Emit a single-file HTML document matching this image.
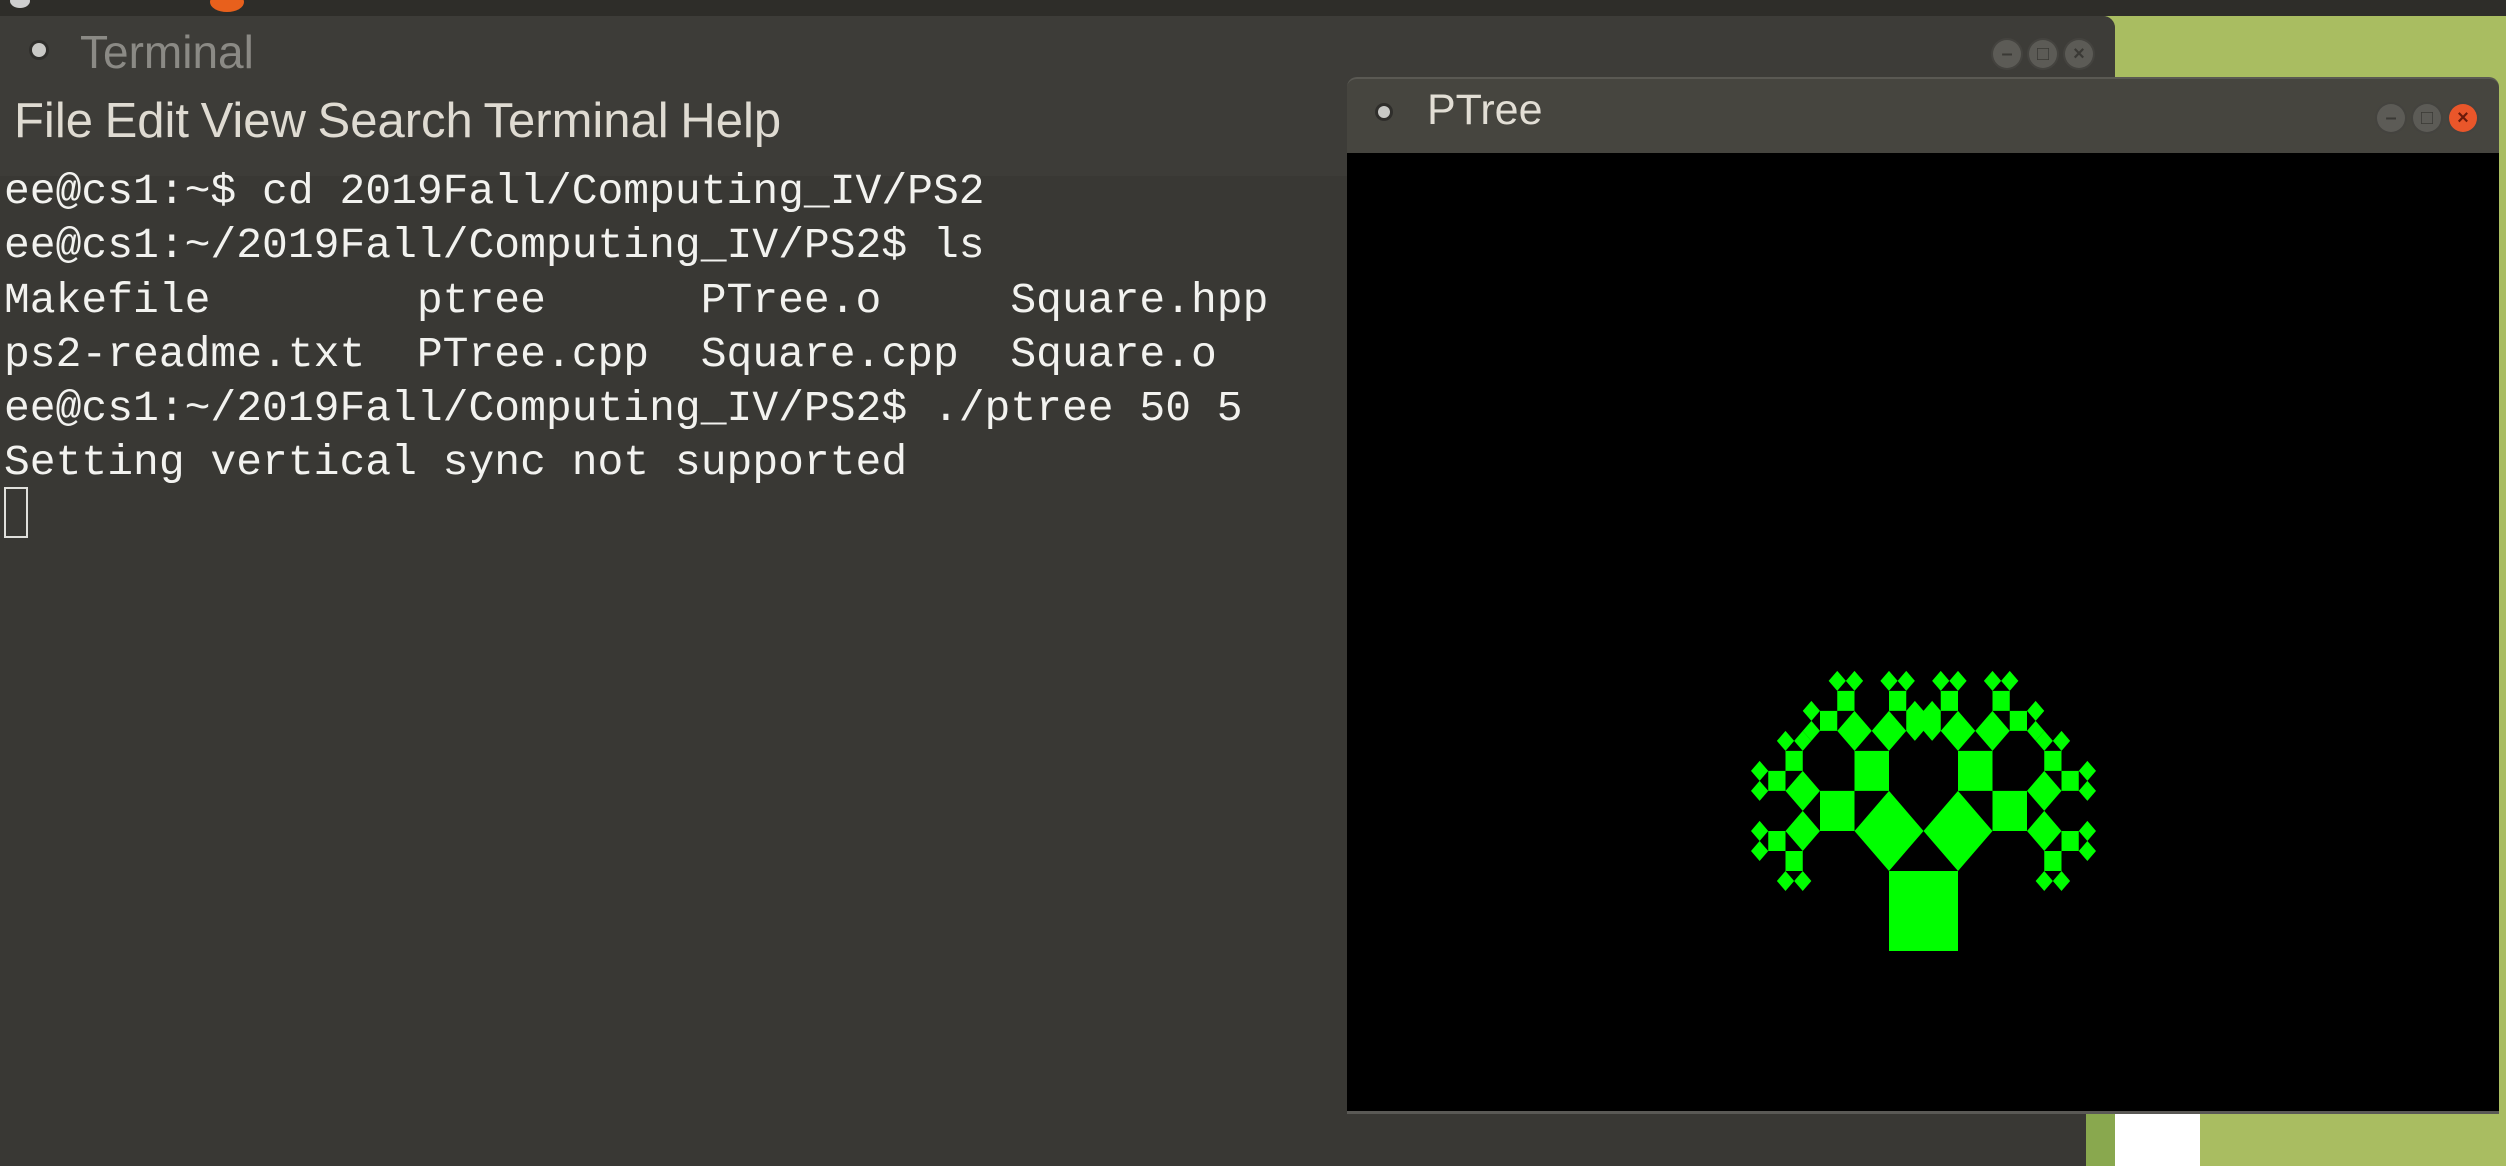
<!DOCTYPE html>
<html><head><meta charset="utf-8"><style>
html,body{margin:0;padding:0;}
body{width:2506px;height:1166px;position:relative;overflow:hidden;background:#a9bd61;font-family:"Liberation Sans",sans-serif;}
.abs{position:absolute;}
.topbar{left:0;top:0;width:2506px;height:16px;background:#2e2d29;}
.term{left:0;top:16px;width:2115px;height:1150px;background:#393834;border-top-right-radius:12px;overflow:hidden;}
.ttitle{left:0;top:0;width:2115px;height:72px;background:#3d3c38;}
.menu{left:0;top:72px;width:2115px;height:88px;background:#3d3c38;}
.mono{font-family:"Liberation Mono",monospace;font-size:43px;color:#f2f2ef;white-space:pre;line-height:54.3px;}
.btn{position:absolute;width:28px;height:28px;border-radius:50%;background:#5c5b56;box-shadow:0 0 0 2px #44433f;color:#3a3935;font-size:20px;line-height:28px;text-align:center;font-weight:bold;}
</style></head><body>
<div class="abs topbar"></div>
<div class="abs" style="left:10px;top:-6px;width:20px;height:14px;border-radius:50%;background:#cfcfcf"></div>
<div class="abs" style="left:210px;top:-8px;width:34px;height:20px;border-radius:50%;background:#e8601c"></div>
<div class="abs term">
  <div class="abs ttitle"></div>
  <div class="abs" style="left:32px;top:27px;width:14px;height:14px;border-radius:50%;background:#c9c9c6;box-shadow:0 0 0 3px #2f2e2b"></div>
  <div class="abs" style="left:80px;top:9px;font-size:46px;color:#8b8a85;">Terminal</div>
  <div class="btn" style="left:1993px;top:24px">–</div>
  <div class="btn" style="left:2029px;top:24px">□</div>
  <div class="btn" style="left:2065px;top:24px">×</div>
  <div class="abs menu"></div>
  <div class="abs" style="left:14px;top:77px;font-size:49px;color:#dfdbd2;word-spacing:-2px;">File Edit View Search Terminal Help</div>
  <div class="abs mono" style="left:4px;top:149px;">ee@cs1:~$ cd 2019Fall/Computing_IV/PS2
ee@cs1:~/2019Fall/Computing_IV/PS2$ ls
Makefile        ptree      PTree.o     Square.hpp
ps2-readme.txt  PTree.cpp  Square.cpp  Square.o
ee@cs1:~/2019Fall/Computing_IV/PS2$ ./ptree 50 5
Setting vertical sync not supported</div>
  <div class="abs" style="left:4px;top:471px;width:24px;height:51px;border:2px solid #e0e0dc;box-sizing:border-box"></div>
</div>
<div class="abs" style="left:2086px;top:1111px;width:29px;height:55px;background:#89a84e"></div>
<div class="abs" style="left:2115px;top:1111px;width:85px;height:55px;background:#ffffff"></div>
<div class="abs" style="left:1347px;top:77px;width:1152px;height:76px;background:#46453f;border-top-left-radius:10px;border-top-right-radius:10px;border-top:2px solid #5a5953;box-sizing:border-box"></div>
<div class="abs" style="left:1378px;top:106px;width:12px;height:12px;border-radius:50%;background:#c9c9c6;box-shadow:0 0 0 3px #2f2e2b"></div>
<div class="abs" style="left:1427px;top:86px;font-size:43px;color:#e2ded5;">PTree</div>
<div class="btn" style="left:2377px;top:104px">–</div>
<div class="btn" style="left:2413px;top:104px">□</div>
<div class="btn" style="left:2449px;top:104px;background:#e9562a;color:#6a1a0a">×</div>
<div class="abs" style="left:1347px;top:153px;width:1152px;height:961px;background:#000;border-bottom:3px solid #5a5955;box-sizing:border-box"></div>
<svg class="abs" style="left:0;top:0" width="2506" height="1166"><g id="tree" fill="#00ff00" transform="translate(1889,951) scale(1,1.16)"></g></svg>
<script>
(function(){
var g=document.getElementById('tree');var pts=[];
function sq(ax,ay,bx,by,d){
 var vx=bx-ax,vy=by-ay;var px=vy,py=-vx;
 var dx=ax+px,dy=ay+py,cx=bx+px,cy=by+py;
 pts.push([ax,ay,bx,by,cx,cy,dx,dy]);
 if(d<=0)return;
 var ex=(dx+cx)/2+px/2,ey=(dy+cy)/2+py/2;
 sq(dx,dy,ex,ey,d-1);sq(ex,ey,cx,cy,d-1);
}
sq(0,0,69,0,5);
var s='';pts.forEach(function(p){s+='<polygon points="'+p[0]+','+p[1]+' '+p[2]+','+p[3]+' '+p[4]+','+p[5]+' '+p[6]+','+p[7]+'"/>';});
g.innerHTML=s;
})();
</script>
</body></html>
